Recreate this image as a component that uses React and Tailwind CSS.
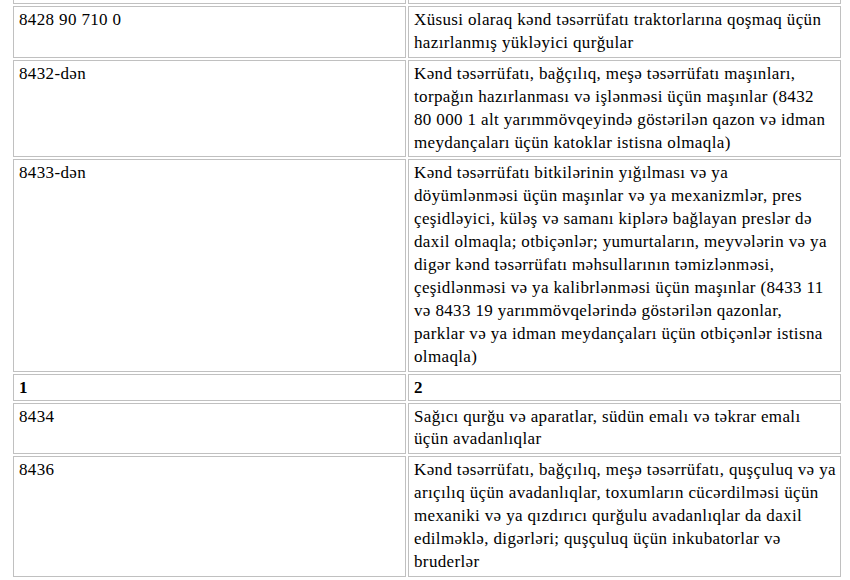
import React from "react";

const rows = [
  {
    code: ["8428 90 710 0"],
    text: [
      "Xüsusi olaraq kənd təsərrüfatı traktorlarına qoşmaq üçün",
      "hazırlanmış yükləyici qurğular",
    ],
  },
  {
    code: ["8432-dən"],
    text: [
      "Kənd təsərrüfatı, bağçılıq, meşə təsərrüfatı maşınları,",
      "torpağın hazırlanması və işlənməsi üçün maşınlar (8432",
      "80 000 1 alt yarımmövqeyində göstərilən qazon və idman",
      "meydançaları üçün katoklar istisna olmaqla)",
    ],
  },
  {
    code: ["8433-dən"],
    text: [
      "Kənd təsərrüfatı bitkilərinin yığılması və ya",
      "döyümlənməsi üçün maşınlar və ya mexanizmlər, pres",
      "çeşidləyici, küləş və samanı kiplərə bağlayan preslər də",
      "daxil olmaqla; otbiçənlər; yumurtaların, meyvələrin və ya",
      "digər kənd təsərrüfatı məhsullarının təmizlənməsi,",
      "çeşidlənməsi və ya kalibrlənməsi üçün maşınlar (8433 11",
      "və 8433 19 yarımmövqelərində göstərilən qazonlar,",
      "parklar və ya idman meydançaları üçün otbiçənlər istisna",
      "olmaqla)",
    ],
  },
  { header: true, code: ["1"], text: ["2"] },
  {
    code: ["8434"],
    text: [
      "Sağıcı qurğu və aparatlar, südün emalı və təkrar emalı",
      "üçün avadanlıqlar",
    ],
  },
  {
    code: ["8436"],
    text: [
      "Kənd təsərrüfatı, bağçılıq, meşə təsərrüfatı, quşçuluq və ya",
      "arıçılıq üçün avadanlıqlar, toxumların cücərdilməsi üçün",
      "mexaniki və ya qızdırıcı qurğulu avadanlıqlar da daxil",
      "edilməklə, digərləri; quşçuluq üçün inkubatorlar və",
      "bruderlər",
    ],
  },
];

const Lines = ({ lines }) =>
  lines.map((l, i) => (
    <span key={i} className="block whitespace-nowrap">
      {l}
    </span>
  ));

export default function App() {
  return (
    <div className="bg-white min-h-[580px] overflow-hidden">
      <table className="table-fixed border-separate border-spacing-[2px] mt-[-28px] ml-[11px] w-[832px] font-['Liberation_Serif',serif] text-[17px] tracking-[0.36px] leading-[22.9px] text-black">
        <tbody>
          <tr>
            <td className="w-[393px] h-[30px] p-0 border border-[#c0c0c0]"></td>
            <td className="w-[433px] h-[30px] p-0 border border-[#c0c0c0]"></td>
          </tr>
          {rows.map((r, i) => (
            <tr key={i}>
              <td
                className={`align-top border border-[#c0c0c0] px-[5px] ${
                  r.header ? "pt-[2px] pb-0 font-bold" : "py-[2px]"
                }`}
              >
                <Lines lines={r.code} />
              </td>
              <td
                className={`align-top border border-[#c0c0c0] px-[5px] ${
                  r.header ? "pt-[2px] pb-0 font-bold" : "py-[2px]"
                }`}
              >
                <Lines lines={r.text} />
              </td>
            </tr>
          ))}
        </tbody>
      </table>
    </div>
  );
}
